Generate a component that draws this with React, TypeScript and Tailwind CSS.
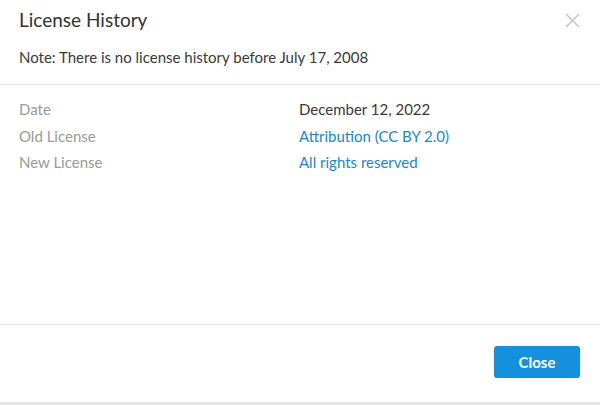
const ROWS = [
  { label: "Date", value: "December 12, 2022", link: false },
  { label: "Old License", value: "Attribution (CC BY 2.0)", link: true },
  { label: "New License", value: "All rights reserved", link: true },
];

export default function App() {
  return (
    <div
      className="flex h-[405px] w-[600px] flex-col bg-white text-[#333]"
      style={{ fontFamily: "Lato, 'Open Sans', sans-serif" }}
    >
      {/* Header */}
      <div className="flex h-[85px] shrink-0 flex-col border-b border-[#e2e2e2] px-[19px]">
        <div className="flex items-start justify-between pt-[8px]">
          <h1 className="text-[19px] leading-[24px] text-[#333]">License History</h1>
          <button className="mt-[5px] mr-[1px] text-[#c8c8c8]" aria-label="Close">
            <svg width="15" height="15" viewBox="0 0 15 15" fill="none" stroke="currentColor" strokeWidth="1.6">
              <path d="M1 1L14 14M14 1L1 14" />
            </svg>
          </button>
        </div>
        <p className="mt-[16px] text-[15px] leading-[18px] text-[#3a3a3a]">
          Note: There is no license history before July 17, 2008
        </p>
      </div>

      {/* Body */}
      <div className="flex flex-1 flex-col pt-[11px] px-[19px]">
        {ROWS.map((r) => (
          <div key={r.label} className="flex h-[26.5px] items-center text-[15px]">
            <span className="w-[280px] text-[#9a9a9a]">{r.label}</span>
            {r.link ? (
              <a href="#" className="text-[#1b87c9]">{r.value}</a>
            ) : (
              <span className="text-[#3a3a3a]">{r.value}</span>
            )}
          </div>
        ))}
      </div>

      {/* Footer */}
      <div className="flex h-[78px] shrink-0 items-start justify-end border-t border-[#e2e2e2] pt-[21px] pr-[20px]">
        <button className="h-[32px] w-[86px] rounded-[3px] bg-[#1590dd] text-[15px] font-bold text-white">
          Close
        </button>
      </div>
      <div className="h-[3px] shrink-0 bg-[#e4e4e4]" />
    </div>
  );
}
